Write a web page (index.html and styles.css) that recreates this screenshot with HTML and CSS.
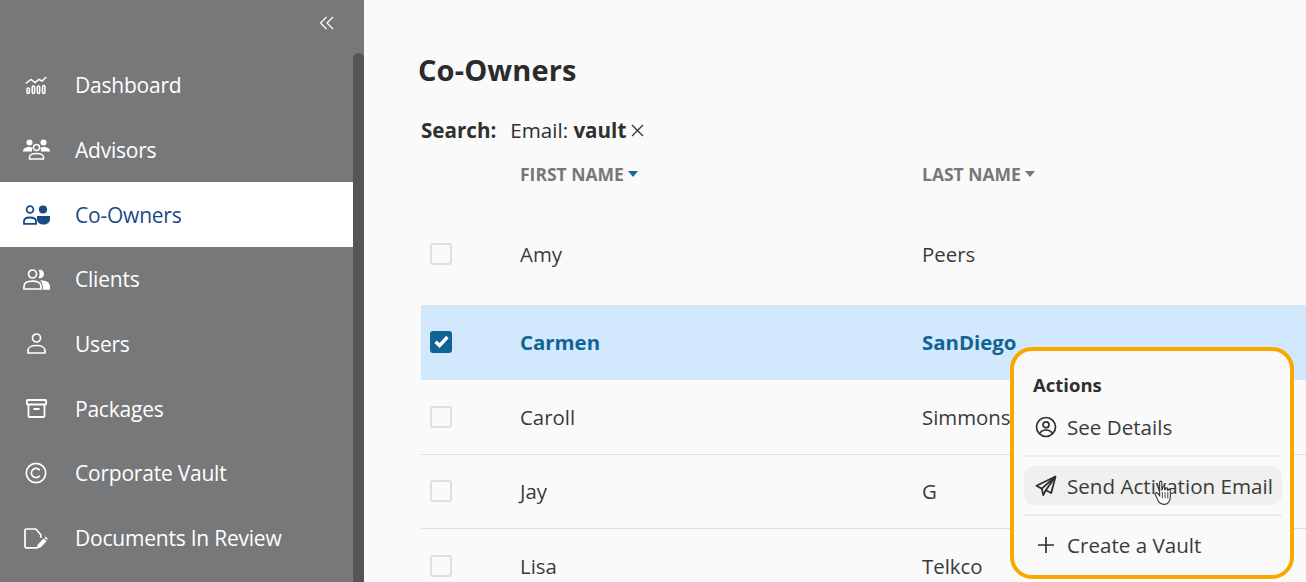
FILE: index.html
```html
<!DOCTYPE html>
<html lang="en">
<head>
<meta charset="utf-8">
<title>Co-Owners</title>
<link rel="stylesheet" href="styles.css">
</head>
<body>
<div class="app">
  <aside class="sidebar">
    <div class="collapse">
      <svg width="16" height="16" viewBox="0 0 16 16" fill="none" stroke="#fff" stroke-width="1.2"><path d="M7.500 2 1.500 8l6 6M14 2 8 8l6 6"/></svg>
    </div>
    <div class="thumb"></div>
    <nav class="nav">
      <a class="nav-item"><span class="nav-icon">
        <svg width="22" height="19" viewBox="0 0 22 19" fill="none" stroke="#fff" stroke-width="1.500"><path d="M.8 7.500 6 3.500 10 6.500l4-3 3 1.500L21.300 1"/><rect x="2" y="12" width="2.400" height="5.500" rx="1.200"/><rect x="7.200" y="10" width="2.400" height="7.500" rx="1.200"/><rect x="12.300" y="10" width="2.400" height="7.500" rx="1.200"/><rect x="17.500" y="9.500" width="2.400" height="8" rx="1.200"/></svg>
      </span>Dashboard</a>
      <a class="nav-item"><span class="nav-icon">
        <svg width="27" height="21" viewBox="0 0 27 21"><g fill="#fff"><circle cx="6.500" cy="3.500" r="3"/><circle cx="20.500" cy="3.500" r="3"/><path d="M0 12.500c0-3 2.500-4.500 6.500-4.500 1.500 0 2.600.3 3.500.8-1 1-1.200 2.400-1 3.700z"/><path d="M27 12.500c0-3-2.500-4.500-6.500-4.500-1.500 0-2.600.3-3.500.8 1 1 1.200 2.400 1 3.700z"/></g><g fill="none" stroke="#fff" stroke-width="1.500"><circle cx="13.500" cy="8.500" r="3"/><path d="M6.500 20v-1.500c0-2.500 3-4 7-4s7 1.500 7 4V20z"/></g></svg>
      </span>Advisors</a>
      <a class="nav-item active"><span class="nav-icon">
        <svg width="27" height="20" viewBox="0 0 27 20"><g fill="none" stroke="#1a4a86" stroke-width="1.800"><circle cx="7" cy="4.500" r="3.400"/><path d="M1 18.800v-2.600c0-2.400 2.500-3.700 6-3.700s6 1.300 6 3.700v2.600z"/></g><g fill="#1a4a86"><circle cx="20" cy="4.500" r="4.100"/><path d="M14 11h13v3c0 3-2.500 5.500-6 5.500h-1c-3.500 0-6-2.500-6-5.500z"/></g></svg>
      </span>Co-Owners</a>
      <a class="nav-item"><span class="nav-icon">
        <svg width="27" height="21" viewBox="0 0 27 21"><g fill="none" stroke="#fff" stroke-width="1.700"><circle cx="9.500" cy="5" r="4"/><path d="M1 20v-2.500c0-3.500 3.500-5.300 8.500-5.300s8.500 1.800 8.500 5.300V20z"/></g><g fill="#fff"><path d="M15.500 1c3-.8 5.500 1 5.500 4s-2.500 4.800-5.500 4c1.500-2.500 1.500-5.500 0-8z"/><path d="M17 11.500c5-.5 10 1.500 10 6V20.800h-7.200v-3.300c0-2.500-1-4.500-2.800-6z"/></g></svg>
      </span>Clients</a>
      <a class="nav-item"><span class="nav-icon">
        <svg width="19" height="21" viewBox="0 0 19 21" fill="none" stroke="#fff" stroke-width="1.700"><circle cx="9.500" cy="5" r="4"/><path d="M1 20v-2.500c0-3 3.500-5 8.500-5s8.500 2 8.500 5V20z"/></svg>
      </span>Users</a>
      <a class="nav-item"><span class="nav-icon">
        <svg width="21" height="19" viewBox="0 0 21 19" fill="none" stroke="#fff" stroke-width="1.800"><rect x=".9" y="1" width="19.200" height="4.500" rx=".8"/><path d="M2.500 5.500v11.500c0 .6.400 1 1 1h14c.6 0 1-.4 1-1V5.500M7.500 10h6"/></svg>
      </span>Packages</a>
      <a class="nav-item"><span class="nav-icon">
        <svg width="22" height="22" viewBox="0 0 22 22" fill="none" stroke="#fff" stroke-width="1.700"><circle cx="11" cy="11" r="9.700"/><path d="M14.800 8.200a4.700 4.700 0 1 0 0 5.600"/></svg>
      </span>Corporate Vault</a>
      <a class="nav-item"><span class="nav-icon">
        <svg width="24" height="21" viewBox="0 0 24 21"><path d="M13.500 19.800H2.300c-.8 0-1.300-.5-1.300-1.200V2.300c0-.8.500-1.300 1.300-1.300h9.500l5 5.800v3" fill="none" stroke="#fff" stroke-width="1.700"/><path d="M12.800 20.500l.8-3.800 6-6.200 3 2.800-6 6.200z" fill="#fff"/><path d="M20.500 9.500l1-1 2.200 2.200-1 1.200z" fill="#fff"/></svg>
      </span>Documents In Review</a>
    </nav>
  </aside>

  <main class="main">
    <h1 class="title">Co-Owners</h1>
    <div class="search">
      <strong class="search-label">Search:</strong>
      <span>Email: <b>vault</b></span>
      <svg class="search-x" width="13" height="13" viewBox="0 0 13 13" stroke="#2f2f2f" stroke-width="1.300"><path d="M1 1l11 11M12 1 1 12"/></svg>
    </div>
    <div class="table">
      <div class="row head">
        <span></span>
        <span class="th">FIRST NAME<i class="caret sorted"></i></span>
        <span class="th">LAST NAME<i class="caret"></i></span>
      </div>
      <div class="row first">
        <span class="check"></span><span>Amy</span><span>Peers</span>
      </div>
      <div class="row selected">
        <span class="check on"><svg width="15" height="13" viewBox="0 0 14 12" fill="none" stroke="#fff" stroke-width="3.200"><path d="M1.500 6.200 5.200 9.800l7.300-8"/></svg></span><span>Carmen</span><span>SanDiego</span>
      </div>
      <div class="row">
        <span class="check"></span><span>Caroll</span><span>Simmons</span>
      </div>
      <div class="row">
        <span class="check"></span><span>Jay</span><span>G</span>
      </div>
      <div class="row">
        <span class="check"></span><span>Lisa</span><span>Telkco</span>
      </div>
    </div>

    <div class="menu">
      <div class="menu-title">Actions</div>
      <a class="menu-item">
        <svg width="22" height="22" viewBox="0 0 22 22" fill="none" stroke="#2f2f2f" stroke-width="1.700"><circle cx="11" cy="11" r="9.500"/><circle cx="11" cy="8.800" r="3"/><path d="M4.800 17.500c1-2.300 3.300-3.500 6.200-3.500s5.200 1.200 6.200 3.500"/></svg>
        See Details</a>
      <div class="menu-sep"></div>
      <a class="menu-item hover">
        <svg width="22" height="22" viewBox="0 0 22 22" fill="none" stroke="#2f2f2f" stroke-width="1.800" stroke-linejoin="round"><path d="M20.500 1.500 1.500 10.800 6.800 13.600 8.300 20.200 10.800 15.200 16.200 18z"/><path d="M20.500 1.500 6.800 13.600M20.500 1.500 10.800 15.200"/></svg>
        Send Activation Email</a>
      <div class="menu-sep"></div>
      <a class="menu-item">
        <svg width="22" height="22" viewBox="0 0 22 22" stroke="#2f2f2f" stroke-width="1.700"><path d="M11 3v16M3 11h16"/></svg>
        Create a Vault</a>
      <svg class="cursor" width="20" height="26" viewBox="0 0 18 24"><path d="M5 2c0-1.300 2-1.300 2 0v7l.6-.3V7c0-1 2-1 2 0v2l.6-.2V8c0-1 2-1 2 0v1.500l.6-.1c0-1 2-1 2 .2V16c0 3.500-2.500 6.500-5.800 6.500-2.800 0-4.500-1.500-5.500-3.500L1 13.500c-.8-1.400.8-2.500 2-1.300L5 14.500z" fill="#fff" stroke="#2f2f2f" stroke-width="1"/><path d="M7.500 11v6M10 11v6M12.500 11v6" stroke="#2f2f2f" stroke-width=".8"/></svg>
    </div>
  </main>
</div>
</body>
</html>
```
FILE: styles.css
```css
* { box-sizing: border-box; }
html, body { margin: 0; height: 100%; }
body {
  font-family: "Open Sans", "Liberation Sans", sans-serif;
  color: #2f2f2f;
  overflow: hidden;
  background: #fafafa;
}
.app { display: flex; width: 1306px; height: 582px; overflow: hidden; }
.sidebar {
  position: relative;
  width: 364px;
  flex: none;
  background: #77787a;
  color: #fff;
}
.collapse {
  height: 52.9px;
  display: flex;
  justify-content: flex-end;
  padding: 15px 29px 0 0;
}
.thumb {
  position: absolute;
  right: 0;
  top: 53px;
  bottom: -10px;
  width: 11px;
  background: #555556;
  border-radius: 6px 6px 0 0;
}
.nav { width: 353px; }
.nav-item {
  display: flex;
  align-items: center;
  height: 64.7px;
  padding-left: 21px;
  font-size: 21px;
  letter-spacing: -0.22px;
  color: #fff;
}
.nav-icon {
  width: 30px;
  margin-right: 24px;
  flex: none;
  display: flex;
  align-items: center;
  justify-content: center;
}
.nav-item.active { background: #fff; color: #1a4a86; }
.main { position: relative; flex: 1; min-width: 0; }
.title {
  margin: 0;
  padding: 51px 0 0 54px;
  font-size: 29px;
  line-height: 38px;
  font-weight: 700;
  letter-spacing: 0.13px;
  color: #2b2b2b;
}
.search {
  display: flex;
  align-items: center;
  margin: 27px 0 0 57px;
  height: 29px;
  padding-bottom: 1px;
  font-size: 20.6px;
}
.search-label { margin-right: 14px; }
.search-x { margin-left: 5px; }
.table { margin: 0 0 0 57px; }
.row {
  display: grid;
  grid-template-columns: 90px 402px 1fr;
  align-items: center;
  height: 74.5px;
  padding-left: 9px;
  font-size: 20.4px;
  border-bottom: 1px solid #dfdfdf;
  color: #3a3a3a;
}
.head {
  height: 58px;
  border-bottom: 0;
}
.th { font-size: 17.5px; font-weight: 700; color: #777; display: flex; align-items: center; }
.caret {
  display: inline-block;
  margin-left: 4px;
  border-left: 5.5px solid transparent;
  border-right: 5.5px solid transparent;
  border-top: 6px solid #777;
}
.caret.sorted { border-top-color: #0f6a9f; }
.first { height: 102px; border-bottom: 0; }
.selected {
  height: 75px;
  padding-bottom: 3px;
  background: #d2e8fc;
  font-weight: 700;
  color: #0f6494;
  border-bottom: 0;
  border-top: 1px solid #dfe6ec;
}
.check {
  width: 22px;
  height: 22px;
  border: 2px solid #dfdfdf;
  border-radius: 3px;
  background: #fafafa;
  display: flex;
  align-items: center;
  justify-content: center;
}
.check.on { background: #0f6494; border-color: #0f6494; }
.menu {
  position: absolute;
  left: 646px;
  top: 347px;
  width: 284px;
  height: 232px;
  border: 4px solid #f8a900;
  border-radius: 22px;
  background: #fafafa;
  padding: 0 8px 0 10px;
}
.menu-title {
  font-size: 18.5px;
  font-weight: 700;
  line-height: 24px;
  padding: 22px 0 0 9px;
  height: 56px;
}
.menu-item {
  display: flex;
  align-items: center;
  gap: 10px;
  height: 39px;
  padding-left: 11px;
  font-size: 20.6px;
  border-radius: 10px;
  white-space: nowrap;
  color: #3a3a3a;
}
.menu-item.hover { background: #f0f0f0; }
.menu-sep { height: 2px; background: #ececec; margin: 9px 0; }
.cursor { position: absolute; left: 140px; top: 129px; }
```
